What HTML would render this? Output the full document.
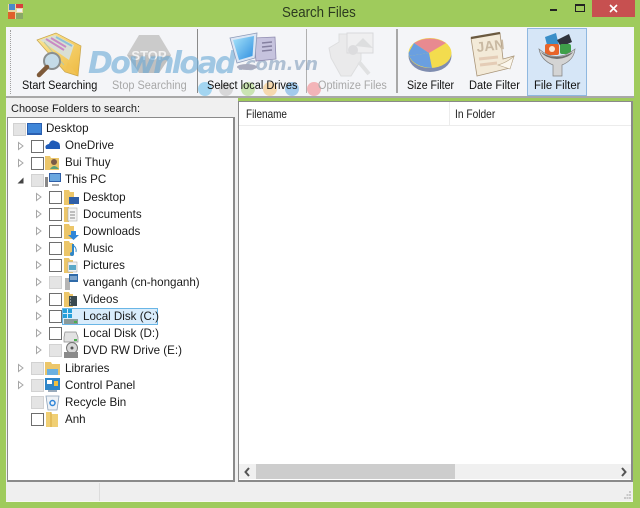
<!DOCTYPE html>
<html><head><meta charset="utf-8"><style>
html,body{margin:0;padding:0}
body{width:640px;height:508px;position:relative;overflow:hidden;background:#9fcb5c;font-family:"Liberation Sans",sans-serif;font-size:11.6px;color:#1a1a1a}
.a{position:absolute}
.t{position:absolute;white-space:nowrap;line-height:14px;margin-top:1px}
.l{position:absolute;top:79px;white-space:nowrap;line-height:14px;font-size:11.5px;color:#111;transform-origin:0 50%}
.d{color:#a8a8a8}
.s{position:absolute;top:29px;width:2px;height:64px;background:#a8a8a8}
.c{position:absolute;width:11px;height:11px;border:1px solid #6e6e6e;background:#fff}
.g{background:#e4e4e4;border-color:#d2d2d2}
svg{position:absolute;overflow:visible}
</style></head><body>
<!-- app icon -->
<svg style="left:8px;top:4px" width="15" height="15"><rect width="15" height="15" fill="#e8d8a0"/><rect x="1" y="0" width="6" height="6" fill="#4a8ac8"/><rect x="8" y="0" width="7" height="4" fill="#d8403c"/><rect x="9" y="5" width="5" height="3" fill="#f0f0f0"/><rect x="0" y="8" width="7" height="7" fill="#e0602c"/><rect x="8" y="9" width="7" height="6" fill="#8aa868"/></svg>
<div class="t" style="left:282px;top:3px;font-size:15px;line-height:17px;color:#2c3a20;transform:scaleX(.885);transform-origin:0 50%">Search Files</div>
<div class="a" style="left:550px;top:9px;width:7px;height:2px;background:#222"></div>
<div class="a" style="left:575px;top:4px;width:8px;height:5px;border:1px solid #222;border-top-width:2px"></div>
<div class="a" style="left:592px;top:0;width:43px;height:17px;background:#c75050"></div>
<svg style="left:609px;top:4px" width="9" height="9"><path d="M1 1L8 8M8 1L1 8" stroke="#fff" stroke-width="1.6"/></svg>
<!-- toolbar -->
<div class="a" style="left:6px;top:27px;width:628px;height:69px;background:#f4f5f8"></div>
<div class="a" style="left:6px;top:96px;width:628px;height:2px;background:#a8a8a8"></div>
<div class="a" style="left:10px;top:30px;height:64px;border-left:1px dotted #a0a0a0"></div>
<div class="s" style="left:197px;width:1px;background:#8a8a8a"></div>
<div class="s" style="left:306px;width:1px;background:#b0b0b0"></div>
<div class="s" style="left:396px"></div>
<div class="a" style="left:527px;top:28px;width:58px;height:66px;background:#d6e6f7;border:1px solid #8fb8e0"></div>
<!-- Start searching icon -->
<svg style="left:36px;top:32px" width="46" height="46"><defs><linearGradient id="fy" x1="0" y1="0" x2="1" y2="1"><stop offset="0" stop-color="#fbe89a"/><stop offset="1" stop-color="#eeb93f"/></linearGradient></defs><path d="M1 8L20 1L45 14L42 44L29 40Z" fill="url(#fy)" stroke="#c8a54e" stroke-width=".7"/><path d="M4 8L19 3L38 13L33 28Z" fill="#d9dfd4"/><path d="M10 7L28 18M15 6L30 15" stroke="#c98bc4" stroke-width="2"/><path d="M20 5L36 14" stroke="#8fc0d8" stroke-width="2"/><path d="M8 10L28 33" stroke="#b8c8a8"/><path d="M32 30L41 43L29 39Z" fill="#f1c355"/><circle cx="16" cy="29" r="8" fill="#c4dbe8" stroke="#8a8f90" stroke-width="2"/><path d="M11 35L3 43" stroke="#7e5a3a" stroke-width="4.5" stroke-linecap="round"/></svg>
<!-- stop -->
<svg style="left:127px;top:35px" width="44" height="40"><path d="M12 0H32L44 20L32 38H12L0 20Z" fill="#cbcbcb"/><path d="M0 20L12 38H32L44 20Z" fill="#c0c0c0"/><text x="22" y="25" font-size="13" font-weight="bold" fill="#f2f2f2" text-anchor="middle" font-family="Liberation Sans">STOP</text></svg>
<!-- optimize -->
<svg style="left:329px;top:32px" width="46" height="46" opacity=".6"><path d="M0 16L10 10V2H22V12H32V28L22 44H12L2 26Z" fill="#e4e4e4" stroke="#cfcfcf"/><rect x="18" y="1" width="26" height="20" fill="#ececec" stroke="#c8c8c8"/><path d="M26 14L34 6L44 16" fill="#cfcfcf"/><circle cx="24" cy="18" r="5" fill="#cdcdcd"/><path d="M30 30L40 42" stroke="#d4d4d4" stroke-width="4"/></svg>
<!-- size -->
<svg style="left:408px;top:38px" width="44" height="34"><ellipse cx="22" cy="18" rx="21.5" ry="16" fill="#7f8db0"/><ellipse cx="22" cy="15" rx="21.5" ry="15" fill="#f3dc4e"/><path d="M21 15L1 18Q6 29 24 30Z" fill="#6a9fe0"/><path d="M21 15L6 5Q22 -4 38 5Z" fill="#e88a90"/><path d="M21 15L1 18L0.5 15L6 5Z" fill="#6a9fe0"/></svg>
<!-- date -->
<svg style="left:470px;top:32px" width="46" height="45"><path d="M1 6L30 1L33 27L44 24L40 36L7 44Z" fill="#f3ead8" stroke="#a89478" stroke-width=".8"/><path d="M1 6L30 1" stroke="#6b5a40" stroke-width="2.4"/><path d="M28 33Q38 30 44 24L40 37Z" fill="#fbf7ee" stroke="#b8a688" stroke-width=".6"/><text x="7" y="20" font-size="14" font-weight="bold" fill="#c9b9a2" font-family="Liberation Sans" transform="rotate(-6 7 20)">JAN</text><path d="M9 27L28 25M10 33L27 31" stroke="#e4ccb6" stroke-width="3"/></svg>
<!-- file filter -->
<svg style="left:539px;top:32px" width="36" height="45"><path d="M6 5L17 1L20 14L9 17Z" fill="#3b8fc8"/><path d="M18 8L30 2L33 10L22 15Z" fill="#30343c"/><rect x="6" y="12" width="14" height="11" rx="2" fill="#e8642a"/><circle cx="13" cy="17" r="3" fill="#f8e8d8"/><rect x="21" y="12" width="11" height="10" rx="2" fill="#3fa04a"/><path d="M0 17Q17 32 36 17Q35 28 23 33V44H14V33Q2 28 0 17Z" fill="#d4d4d4" stroke="#808080" stroke-width=".7"/><path d="M2 20Q17 30 34 20Q30 26 18 27Q6 26 2 20Z" fill="#707070"/></svg>
<div class="l" style="left:22px;transform:scaleX(.95)">Start Searching</div>
<div class="l d" style="left:112px;transform:scaleX(.95)">Stop Searching</div>
<div class="l" style="left:407px;transform:scaleX(.92)">Size Filter</div>
<div class="l" style="left:469px;transform:scaleX(.96)">Date Filter</div>
<div class="l" style="left:534px;transform:scaleX(.98)">File Filter</div>
<!-- watermark -->
<div class="t" style="left:88px;top:46px;font-size:30px;line-height:34px;font-weight:bold;font-style:italic;color:#6aa9d6;opacity:.6;font-family:'DejaVu Sans',sans-serif;letter-spacing:-2.7px">Download</div>
<div class="t" style="left:238px;top:54px;font-size:18px;line-height:20px;font-weight:bold;font-style:italic;color:#6d8db0;opacity:.5;font-family:'DejaVu Sans',sans-serif">.com.vn</div>
<!-- drives -->
<svg style="left:229px;top:32px" width="50" height="46"><defs><linearGradient id="sc" x1="0" y1="0" x2="1" y2="1"><stop offset="0" stop-color="#a8e4fa"/><stop offset="1" stop-color="#2f8fe0"/></linearGradient></defs><path d="M25 6L46 5L47 27L27 29Z" fill="#c6c3de" stroke="#908cb0" stroke-width=".8"/><path d="M33 11L43 10M33 15L43 14M33 19L43 18" stroke="#8580a0" stroke-width="1.6"/><path d="M1 6L28 1L26 26L8 31Z" fill="#dbe6f4" stroke="#8d9ab8" stroke-width=".8"/><path d="M4 8L25 4L23.5 24L10 28Z" fill="url(#sc)"/><ellipse cx="18" cy="35" rx="10" ry="3" fill="#a9acbf"/></svg>
<div class="a" style="left:198px;top:82px;width:14px;height:14px;border-radius:50%;background:#8fcdef;opacity:.8"></div>
<div class="a" style="left:219px;top:82px;width:14px;height:14px;border-radius:50%;background:#cfcfcf;opacity:.8"></div>
<div class="a" style="left:241px;top:82px;width:14px;height:14px;border-radius:50%;background:#bfe0a0;opacity:.8"></div>
<div class="a" style="left:263px;top:82px;width:14px;height:14px;border-radius:50%;background:#f6d29c;opacity:.8"></div>
<div class="a" style="left:285px;top:82px;width:14px;height:14px;border-radius:50%;background:#8fbfe8;opacity:.8"></div>
<div class="a" style="left:307px;top:82px;width:14px;height:14px;border-radius:50%;background:#f2a4a8;opacity:.8"></div>
<div class="l" style="left:207px;transform:scaleX(.957)">Select local Drives</div>
<div class="l d" style="left:318px;transform:scaleX(.945)">Optimize Files</div>
<!-- left panel -->
<div class="a" style="left:6px;top:98px;width:229px;height:20px;background:#f0f0f0"></div>
<div class="t" style="left:11px;top:101px;font-size:11px">Choose Folders to search:</div>
<div class="a" style="left:6px;top:118px;width:1px;height:364px;background:#f0f0f0"></div>
<div class="a" style="left:7px;top:117px;width:228px;height:365px;background:#fff;border:1px solid #8a8a8a;border-width:1px 2px 2px 1px;box-sizing:border-box"></div>
<div class="a" style="left:235px;top:98px;width:3px;height:385px;background:#f0f0f0"></div>
<!-- right panel -->
<div class="a" style="left:238px;top:101px;width:395px;height:381px;background:#fff;border:1px solid #8a8a8a;border-width:1px 2px 2px 1px;box-sizing:border-box"></div>
<div class="a" style="left:239px;top:125px;width:392px;height:1px;background:#ececec"></div>
<div class="a" style="left:449px;top:102px;width:1px;height:23px;background:#ececec"></div>
<div class="t" style="left:246px;top:106px;font-size:12px;transform:scaleX(.83);transform-origin:0 50%">Filename</div>
<div class="t" style="left:455px;top:106px;font-size:12px;transform:scaleX(.85);transform-origin:0 50%">In Folder</div>
<div class="a" style="left:239px;top:464px;width:392px;height:15px;background:#f0f0f0"></div>
<div class="a" style="left:256px;top:464px;width:199px;height:15px;background:#cdcdcd"></div>
<svg style="left:244px;top:468px" width="8" height="8"><path d="M5 0L1.5 4L5 8" fill="none" stroke="#555" stroke-width="2"/></svg>
<svg style="left:620px;top:468px" width="8" height="8"><path d="M2 0L5.5 4L2 8" fill="none" stroke="#555" stroke-width="2"/></svg>
<!-- status -->
<div class="a" style="left:6px;top:482px;width:627px;height:19px;background:#efefef"></div>
<div class="a" style="left:99px;top:483px;width:1px;height:18px;background:#dcdcdc"></div>
<div class="a" style="left:6px;top:501px;width:627px;height:1px;background:#f6f9ee"></div>
<svg style="left:622px;top:491px" width="10" height="9"><path d="M7 1h2M4.5 4h2M7 4h2M2 7h2M4.5 7h2M7 7h2" stroke="#bcbcbc" stroke-width="1.4"/></svg>
<!-- tree -->
<div class="c g" style="left:13px;top:123px"></div>
<svg style="left:27px;top:122px" width="15" height="14"><rect x="0" y="1" width="15" height="12" fill="#2a5fb0"/><rect x="1" y="2" width="13" height="9" fill="#3f86d8"/></svg>
<div class="t" style="left:46px;top:121px">Desktop</div>

<svg style="left:18px;top:142px" width="6" height="8"><path d="M.5 .5L5 4L.5 7.5Z" fill="#fff" stroke="#a6a6a6"/></svg>
<div class="c" style="left:31px;top:140px"></div>
<svg style="left:45px;top:139px" width="16" height="11"><path d="M1 10Q-1 6 4 5Q6 0 10 2Q15 3 15 7L15 10Z" fill="#1f5bb8"/></svg>
<div class="t" style="left:65px;top:138px">OneDrive</div>

<svg style="left:18px;top:159px" width="6" height="8"><path d="M.5 .5L5 4L.5 7.5Z" fill="#fff" stroke="#a6a6a6"/></svg>
<div class="c" style="left:31px;top:157px"></div>
<svg style="left:45px;top:155px" width="16" height="15"><path d="M0 1H5L6 3H14V15H0Z" fill="#ecc66a"/><circle cx="9" cy="7" r="3" fill="#7a5a48"/><path d="M5 14Q9 8 14 14Z" fill="#5aa07a"/></svg>
<div class="t" style="left:65px;top:155px">Bui Thuy</div>

<svg style="left:17px;top:177px" width="7" height="7"><path d="M6.5 .5V6.5H.5Z" fill="#444"/></svg>
<div class="c g" style="left:31px;top:174px"></div>
<svg style="left:45px;top:173px" width="16" height="14"><rect x="4" y="0" width="12" height="9" fill="#2f5fa8"/><rect x="5" y="1" width="10" height="7" fill="#6aa8e0"/><rect x="0" y="4" width="3" height="10" fill="#888"/><rect x="7" y="11" width="7" height="2" fill="#aaa"/></svg>
<div class="t" style="left:65px;top:172px">This PC</div>

<svg style="left:36px;top:193px" width="6" height="8"><path d="M.5 .5L5 4L.5 7.5Z" fill="#fff" stroke="#a6a6a6"/></svg>
<div class="c" style="left:49px;top:191px"></div>
<svg style="left:64px;top:190px" width="15" height="15"><path d="M0 0H5L6 2H10V15H0Z" fill="#ecc66a"/><rect x="5" y="7" width="10" height="7" fill="#2f5fa8"/></svg>
<div class="t" style="left:83px;top:190px">Desktop</div>

<svg style="left:36px;top:210px" width="6" height="8"><path d="M.5 .5L5 4L.5 7.5Z" fill="#fff" stroke="#a6a6a6"/></svg>
<div class="c" style="left:49px;top:208px"></div>
<svg style="left:64px;top:207px" width="14" height="15"><path d="M0 0H5V15H0Z" fill="#ecc66a"/><rect x="4" y="1" width="9" height="13" fill="#f4f4f4" stroke="#aaa" stroke-width=".6"/><path d="M6 5H11M6 8H11M6 11H11" stroke="#888"/></svg>
<div class="t" style="left:83px;top:207px">Documents</div>

<svg style="left:36px;top:227px" width="6" height="8"><path d="M.5 .5L5 4L.5 7.5Z" fill="#fff" stroke="#a6a6a6"/></svg>
<div class="c" style="left:49px;top:225px"></div>
<svg style="left:64px;top:224px" width="15" height="16"><path d="M0 0H5L6 2H10V15H0Z" fill="#ecc66a"/><path d="M7 7H12V11H15L9.5 16L4 11H7Z" fill="#2f86d8"/></svg>
<div class="t" style="left:83px;top:224px">Downloads</div>

<svg style="left:36px;top:244px" width="6" height="8"><path d="M.5 .5L5 4L.5 7.5Z" fill="#fff" stroke="#a6a6a6"/></svg>
<div class="c" style="left:49px;top:242px"></div>
<svg style="left:64px;top:241px" width="14" height="15"><path d="M0 0H5L6 2H9V15H0Z" fill="#ecc66a"/><path d="M9 3V13" stroke="#2f86c8" stroke-width="2"/><path d="M9 4Q13 7 12 11" stroke="#2f86c8" fill="none"/><circle cx="8" cy="13" r="2" fill="#2f86c8"/></svg>
<div class="t" style="left:83px;top:241px">Music</div>

<svg style="left:36px;top:261px" width="6" height="8"><path d="M.5 .5L5 4L.5 7.5Z" fill="#fff" stroke="#a6a6a6"/></svg>
<div class="c" style="left:49px;top:259px"></div>
<svg style="left:64px;top:258px" width="14" height="15"><path d="M0 0H5L6 2H9V15H0Z" fill="#ecc66a"/><rect x="4" y="4" width="9" height="10" fill="#f4f4f4" stroke="#aaa" stroke-width=".6"/><rect x="5" y="7" width="7" height="5" fill="#5aa8c8"/></svg>
<div class="t" style="left:83px;top:258px">Pictures</div>

<svg style="left:36px;top:278px" width="6" height="8"><path d="M.5 .5L5 4L.5 7.5Z" fill="#fff" stroke="#a6a6a6"/></svg>
<div class="c g" style="left:49px;top:276px"></div>
<svg style="left:65px;top:274px" width="14" height="16"><rect x="0" y="4" width="5" height="12" fill="#b5b5b5"/><rect x="4" y="0" width="9" height="8" fill="#2f6aa8"/><path d="M5 3H12M5 5H12" stroke="#cde"/></svg>
<div class="t" style="left:83px;top:275px">vanganh (cn-honganh)</div>

<svg style="left:36px;top:295px" width="6" height="8"><path d="M.5 .5L5 4L.5 7.5Z" fill="#fff" stroke="#a6a6a6"/></svg>
<div class="c" style="left:49px;top:293px"></div>
<svg style="left:64px;top:292px" width="14" height="15"><path d="M0 0H5L6 2H9V15H0Z" fill="#ecc66a"/><rect x="5" y="4" width="8" height="10" fill="#3a4a50"/><path d="M6 6H7M6 9H7M6 12H7" stroke="#ddd"/></svg>
<div class="t" style="left:83px;top:292px">Videos</div>

<svg style="left:36px;top:312px" width="6" height="8"><path d="M.5 .5L5 4L.5 7.5Z" fill="#fff" stroke="#a6a6a6"/></svg>
<div class="c" style="left:49px;top:310px"></div>
<div class="a" style="left:62px;top:308px;width:94px;height:15px;background:#d9ecfb;border:1px solid #6ab6e6"></div>
<svg style="left:63px;top:309px" width="16" height="15"><rect x="0" y="0" width="4" height="4" fill="#26a0da"/><rect x="5" y="0" width="4" height="4" fill="#26a0da"/><rect x="0" y="5" width="4" height="4" fill="#26a0da"/><rect x="5" y="5" width="4" height="4" fill="#26a0da"/><rect x="1" y="10" width="14" height="5" fill="#8a9a9a"/><rect x="11" y="12" width="3" height="2" fill="#4caf50"/></svg>
<div class="t" style="left:83px;top:309px">Local Disk (C:)</div>

<svg style="left:36px;top:329px" width="6" height="8"><path d="M.5 .5L5 4L.5 7.5Z" fill="#fff" stroke="#a6a6a6"/></svg>
<div class="c" style="left:49px;top:327px"></div>
<svg style="left:63px;top:332px" width="16" height="10"><path d="M2 0H13L15 5V10H1V5Z" fill="#e2e2e2" stroke="#8a8a8a" stroke-width=".7"/><rect x="11" y="7" width="3" height="2" fill="#4caf50"/></svg>
<div class="t" style="left:83px;top:326px">Local Disk (D:)</div>

<svg style="left:36px;top:346px" width="6" height="8"><path d="M.5 .5L5 4L.5 7.5Z" fill="#fff" stroke="#a6a6a6"/></svg>
<div class="c g" style="left:49px;top:344px"></div>
<svg style="left:63px;top:342px" width="16" height="16"><circle cx="9" cy="6" r="5.5" fill="#d8d8d8" stroke="#777"/><circle cx="9" cy="6" r="1.5" fill="#555"/><rect x="1" y="10" width="14" height="6" fill="#8a8a8a"/></svg>
<div class="t" style="left:83px;top:343px">DVD RW Drive (E:)</div>

<svg style="left:18px;top:364px" width="6" height="8"><path d="M.5 .5L5 4L.5 7.5Z" fill="#fff" stroke="#a6a6a6"/></svg>
<div class="c g" style="left:31px;top:362px"></div>
<svg style="left:45px;top:361px" width="15" height="14"><path d="M0 1H6L7 3H15V14H0Z" fill="#ecc66a"/><path d="M2 8H13V14H2Z" fill="#6ab0e0"/></svg>
<div class="t" style="left:65px;top:361px">Libraries</div>

<svg style="left:18px;top:381px" width="6" height="8"><path d="M.5 .5L5 4L.5 7.5Z" fill="#fff" stroke="#a6a6a6"/></svg>
<div class="c g" style="left:31px;top:379px"></div>
<svg style="left:45px;top:378px" width="15" height="15"><rect width="15" height="12" fill="#2f86c8"/><rect x="2" y="2" width="5" height="4" fill="#fff"/><rect x="9" y="3" width="4" height="5" fill="#f0c040"/><rect x="3" y="12" width="9" height="2" fill="#9ab"/></svg>
<div class="t" style="left:65px;top:378px">Control Panel</div>

<div class="c g" style="left:31px;top:396px"></div>
<svg style="left:46px;top:396px" width="13" height="14"><path d="M0 0H13L11 14H2Z" fill="#eef2f6" stroke="#8aa0b8" stroke-width=".8"/><circle cx="6.5" cy="7" r="2.5" fill="none" stroke="#2f86d8" stroke-width="1.5"/></svg>
<div class="t" style="left:65px;top:395px">Recycle Bin</div>

<div class="c" style="left:31px;top:413px"></div>
<svg style="left:46px;top:412px" width="12" height="15"><path d="M0 0H5L6 2H12V15H0Z" fill="#f0cf74"/><path d="M5 0V15" stroke="#d8a83e"/></svg>
<div class="t" style="left:65px;top:412px">Anh</div>
</body></html>
